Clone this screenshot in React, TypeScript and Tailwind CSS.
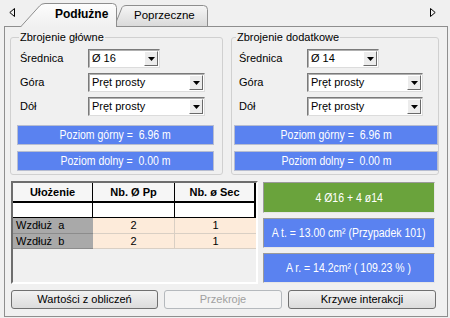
import React from "react";

function Tri() {
  return (
    <svg width="7" height="4" viewBox="0 0 7 4">
      <path d="M0 0 L7 0 L3.5 4 Z" fill="#000" />
    </svg>
  );
}

function Narrow({ children }: { children: React.ReactNode }) {
  return (
    <span className="inline-block shrink-0 scale-x-[0.84] whitespace-pre text-[12.5px] leading-[14px]">
      {children}
    </span>
  );
}

function Select({ w, value }: { w: string; value: string }) {
  return (
    <div
      className={
        "flex h-[19px] items-center bg-white border border-t-[#7a7a7a] border-l-[#7a7a7a] border-b-[#dcdcdc] border-r-[#dcdcdc] shadow-[inset_1px_1px_0_#b0b0b0] " +
        w
      }
    >
      <span className="pl-[3px] text-[11px] leading-[13px] text-black">{value}</span>
      <div className="ml-auto mr-[1px] flex h-[15px] w-[14px] items-center justify-center border border-t-[#ffffff] border-l-[#ffffff] border-b-[#6a6a6a] border-r-[#6a6a6a] bg-[#ececec]">
        <Tri />
      </div>
    </div>
  );
}

function Row({ label, children }: { label: string; children: React.ReactNode }) {
  return (
    <div className="flex h-[19px] items-center">
      <span className="w-[68px] text-[11px] leading-[13px] text-black">{label}</span>
      {children}
    </div>
  );
}

function Bar({ text }: { text: string }) {
  return (
    <div className="flex h-[20px] items-center justify-center overflow-hidden border border-[#b7bdd0] bg-[#5a82f0] text-white">
      <Narrow>{text}</Narrow>
    </div>
  );
}

function Group({
  title,
  cls,
  rowCls,
  sel1,
  w1,
  w2,
}: {
  title: string;
  cls: string;
  rowCls: string;
  sel1: string;
  w1: string;
  w2: string;
}) {
  return (
    <fieldset className={"h-[145px] border border-[#d0d0d0] rounded-[3px] " + cls}>
      <legend className="ml-[2px] px-[1px] text-[11px] leading-[14px] text-black">{title}</legend>
      <div className={"mt-[5px] flex flex-col gap-[5px] " + rowCls}>
        <Row label="Średnica">
          <Select w={w1} value={sel1} />
        </Row>
        <Row label="Góra">
          <Select w={w2} value="Pręt prosty" />
        </Row>
        <Row label="Dół">
          <Select w={w2} value="Pręt prosty" />
        </Row>
      </div>
      <div className="mt-[9px] flex flex-col gap-[6px]">
        <Bar text="Poziom górny =  6.96 m" />
        <Bar text="Poziom dolny =  0.00 m" />
      </div>
    </fieldset>
  );
}

function Btn({ label, w, disabled }: { label: string; w: string; disabled?: boolean }) {
  return (
    <div
      className={
        "flex h-[19px] items-center justify-center rounded-[3px] border text-[11px] leading-[13px] " +
        w +
        (disabled
          ? " border-[#b5b9bd] bg-[#f4f4f4] text-[#a0a0a0]"
          : " border-[#707070] bg-gradient-to-b from-[#f2f2f2] to-[#dcdcdc] text-black")
      }
    >
      {label}
    </div>
  );
}

export default function App() {
  return (
    <div className="h-[318px] w-[450px] overflow-hidden bg-[#f0f0f0] font-['Liberation_Sans',Arial,sans-serif] text-black">
      {/* tab strip */}
      <div className="flex h-[26px] items-end pl-[9px] pr-[14px]">
        <div className="mb-[9px] flex w-[11px] items-center">
          <svg width="6" height="9" viewBox="0 0 6 9">
            <path d="M5.5 0.5 L0.8 4.5 L5.5 8.5 Z" fill="none" stroke="#000" strokeWidth="1" />
          </svg>
        </div>
        <div className="relative z-10 -mb-px h-[24px] w-[97px]">
          <svg className="absolute inset-0" width="97" height="24" viewBox="0 0 97 24">
            <defs>
              <linearGradient id="sel" x1="0" y1="0" x2="0" y2="1">
                <stop offset="0" stopColor="#fdfdfd" />
                <stop offset="1" stopColor="#f0f0f0" />
              </linearGradient>
            </defs>
            <path
              d="M0.5 24 L19.5 3 Q21.5 0.5 25 0.5 L92.5 0.5 Q96.5 0.5 96.5 4.5 L96.5 24"
              fill="url(#sel)"
              stroke="#8e8e8e"
              strokeWidth="1"
            />
          </svg>
          <span className="relative block pl-[35px] pt-[4px] text-[12px] font-bold leading-[14px]">
            Podłużne
          </span>
        </div>
        <div className="relative -ml-[3px] h-[21px] w-[94px]">
          <svg className="absolute inset-0" width="94" height="21" viewBox="0 0 94 21">
            <defs>
              <linearGradient id="uns" x1="0" y1="0" x2="0" y2="1">
                <stop offset="0" stopColor="#f6f6f6" />
                <stop offset="1" stopColor="#dadada" />
              </linearGradient>
            </defs>
            <path
              d="M0.5 21 L8 2.5 Q9 0.5 12 0.5 L89.5 0.5 Q93.5 0.5 93.5 4.5 L93.5 21"
              fill="url(#uns)"
              stroke="#8e8e8e"
              strokeWidth="1"
            />
          </svg>
          <span className="relative block pl-[20px] pt-[3px] text-[11.5px] leading-[14px]">
            Poprzeczne
          </span>
        </div>
        <div className="mb-[9px] ml-auto flex items-center">
          <svg width="6" height="9" viewBox="0 0 6 9">
            <path d="M0.5 0.5 L5.2 4.5 L0.5 8.5 Z" fill="none" stroke="#000" strokeWidth="1" />
          </svg>
        </div>
      </div>

      {/* panel */}
      <div className="ml-[4px] flex h-[291px] w-[444px] flex-col border border-[#8e8e8e] bg-[#f0f0f0] pl-[5px] pt-[3px]">
        <div className="flex gap-[8px]">
          <Group
            title="Zbrojenie główne"
            cls="w-[213px] pl-[6px] pr-[8px]"
            rowCls="pl-[3px]"
            sel1="Ø 16"
            w1="w-[72px]"
            w2="w-[117px]"
          />
          <Group
            title="Zbrojenie dodatkowe"
            cls="w-[208px] pl-[2px] pr-[0px]"
            rowCls="pl-[5px]"
            sel1="Ø 14"
            w1="w-[72px]"
            w2="w-[116px]"
          />
        </div>

        <div className="mt-[6px] flex items-start gap-[5px] pl-[1px]">
          {/* table frame */}
          <div className="h-[103px] w-[247px] border-2 border-t-[#6d6d6d] border-l-[#6d6d6d] border-b-[#ffffff] border-r-[#ffffff] bg-[#f0f0f0]">
            <div className="grid grid-cols-[80px_82px_81px] text-[11px] leading-[13px]">
              <div className="flex h-[20px] items-center justify-center border-b-2 border-r border-black bg-[#f6f6f6] font-bold">
                Ułożenie
              </div>
              <div className="flex h-[20px] items-center justify-center border-b-2 border-r border-black bg-[#f6f6f6] font-bold">
                Nb. Ø Pp
              </div>
              <div className="flex h-[20px] items-center justify-center border-b-2 border-r-2 border-black bg-[#f6f6f6] font-bold">
                Nb. ø Sec
              </div>

              <div className="h-[15px] border-b border-r border-black bg-white" />
              <div className="h-[15px] border-b border-r border-black bg-white" />
              <div className="h-[15px] border-b border-r-2 border-black bg-white" />

              <div className="flex h-[16px] items-center border-b border-[#8c8c8c] bg-[#a9a9a9] pl-[3px] whitespace-pre">
                Wzdłuż  a
              </div>
              <div className="flex h-[16px] items-center justify-center border-b border-r border-[#d9cfc4] bg-[#fdebda]">
                2
              </div>
              <div className="flex h-[16px] items-center justify-center border-b border-[#d9cfc4] bg-[#fdebda]">
                1
              </div>

              <div className="flex h-[15px] items-center border-b border-[#8c8c8c] bg-[#a9a9a9] pl-[3px] whitespace-pre">
                Wzdłuż  b
              </div>
              <div className="flex h-[15px] items-center justify-center border-b border-r border-[#d9cfc4] bg-[#fdebda]">
                2
              </div>
              <div className="flex h-[15px] items-center justify-center border-b border-[#d9cfc4] bg-[#fdebda]">
                1
              </div>
            </div>
          </div>

          {/* right boxes */}
          <div className="mt-[1px] flex w-[172px] flex-col gap-[5px] text-white">
            <div className="flex h-[31px] items-center justify-center overflow-hidden border border-t-[#9a9a9a] border-l-[#9a9a9a] border-b-[#e6e6e6] border-r-[#e6e6e6] bg-[#6aa33c]">
              <Narrow>4 Ø16 + 4 ø14</Narrow>
            </div>
            <div className="flex h-[30px] items-center justify-center overflow-hidden border border-t-[#9a9a9a] border-l-[#9a9a9a] border-b-[#e6e6e6] border-r-[#e6e6e6] bg-[#5a82f0]">
              <Narrow>A t. = 13.00 cm² (Przypadek 101)</Narrow>
            </div>
            <div className="flex h-[30px] items-center justify-center overflow-hidden border border-t-[#9a9a9a] border-l-[#9a9a9a] border-b-[#e6e6e6] border-r-[#e6e6e6] bg-[#5a82f0]">
              <Narrow>A r. = 14.2cm² ( 109.23 % )</Narrow>
            </div>
          </div>
        </div>

        <div className="mt-[6px] flex gap-[6px] pl-[1px]">
          <Btn label="Wartości z obliczeń" w="w-[147px]" />
          <Btn label="Przekroje" w="w-[118px]" disabled />
          <Btn label="Krzywe interakcji" w="w-[148px]" />
        </div>
      </div>
    </div>
  );
}
